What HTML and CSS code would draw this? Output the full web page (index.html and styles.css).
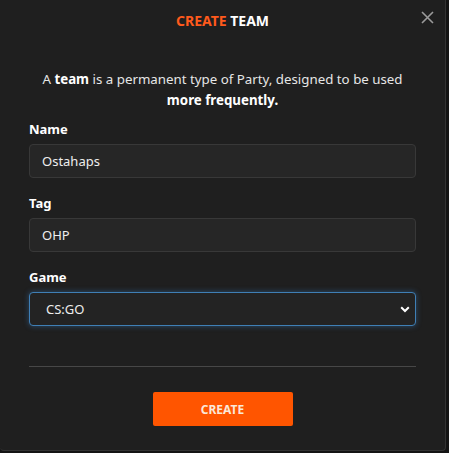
FILE: index.html
```html
<!DOCTYPE html>
<html>
<head>
<meta charset="utf-8">
<link rel="stylesheet" href="styles.css">
</head>
<body>
<div class="dialog">
  <div class="header">
    <h1 class="title"><span class="accent">CREATE</span> TEAM</h1>
    <button class="close" aria-label="Close">
      <svg width="13" height="13" viewBox="0 0 13 13"><path d="M1 1L12 12M12 1L1 12" stroke="#9a9a9a" stroke-width="1.6" fill="none"/></svg>
    </button>
  </div>
  <p class="desc">A <b>team</b> is a permanent type of Party, designed to be used <b>more frequently.</b></p>
  <form class="form">
    <label class="field">
      <span class="label">Name</span>
      <span class="input">Ostahaps</span>
    </label>
    <label class="field">
      <span class="label">Tag</span>
      <span class="input">OHP</span>
    </label>
    <label class="field">
      <span class="label">Game</span>
      <span class="input select">
        <span>CS:GO</span>
        <svg width="10" height="7" viewBox="0 0 10 7"><path d="M1.2 1.3L5 5L8.8 1.3" stroke="#fff" stroke-width="2" fill="none"/></svg>
      </span>
    </label>
  </form>
  <hr class="rule">
  <div class="actions">
    <button class="create">CREATE</button>
  </div>
</div>
</body>
</html>
```
FILE: styles.css
```css
html, body {
  margin: 0;
  padding: 0;
  background: #141414;
}
body {
  font-family: "Noto Sans", "DejaVu Sans", sans-serif;
  color: #e8e8e8;
}
.dialog {
  box-sizing: border-box;
  width: 446px;
  height: 451px;
  background: #1f1f1f;
  border-right: 1px solid #333;
  border-bottom: 1px solid #333;
  border-radius: 0 0 4px 4px;
  padding: 0 29px 0 29px;
  position: relative;
}
.header {
  height: 40px;
  display: flex;
  align-items: center;
  justify-content: center;
}
.title {
  margin: 0;
  font-size: 14px;
  font-weight: 700;
  color: #ffffff;
  letter-spacing: 0;
}
.accent {
  color: #ff5a1c;
}
.close {
  position: absolute;
  top: 10px;
  right: 10px;
  background: none;
  border: 0;
  padding: 0;
  width: 15px;
  height: 15px;
  display: flex;
  align-items: center;
  justify-content: center;
}
.desc {
  margin: 29px 0 0 0;
  text-align: center;
  font-size: 13.3px;
  line-height: 21px;
  color: #e6e6e6;
}
.desc b {
  color: #ffffff;
}
.form {
  display: flex;
  flex-direction: column;
  gap: 16px;
  margin-top: 9px;
}
.field {
  display: flex;
  flex-direction: column;
  gap: 6px;
}
.label {
  font-size: 13px;
  font-weight: 700;
  color: #ffffff;
  line-height: 18px;
}
.input {
  box-sizing: border-box;
  height: 34px;
  background: #262626;
  border: 1px solid #383838;
  border-radius: 4px;
  padding: 0 12px;
  display: flex;
  align-items: center;
  font-size: 13px;
  color: #eeeeee;
}
.select {
  border-color: #3f7fb5;
  box-shadow: 0 0 5px 1px rgba(60, 130, 200, 0.35);
  justify-content: space-between;
  padding: 0 5px 0 16px;
  background: #232323;
}
.rule {
  margin: 40px 0 0 0;
  border: 0;
  border-top: 1px solid #474747;
}
.actions {
  display: flex;
  justify-content: center;
  margin-top: 25px;
}
.create {
  width: 140px;
  height: 34px;
  background: #ff5500;
  border: 0;
  border-radius: 2px;
  color: #fbe8d8;
  font-family: "Noto Sans", sans-serif;
  font-weight: 700;
  font-size: 12px;
  letter-spacing: 0;
}
```
